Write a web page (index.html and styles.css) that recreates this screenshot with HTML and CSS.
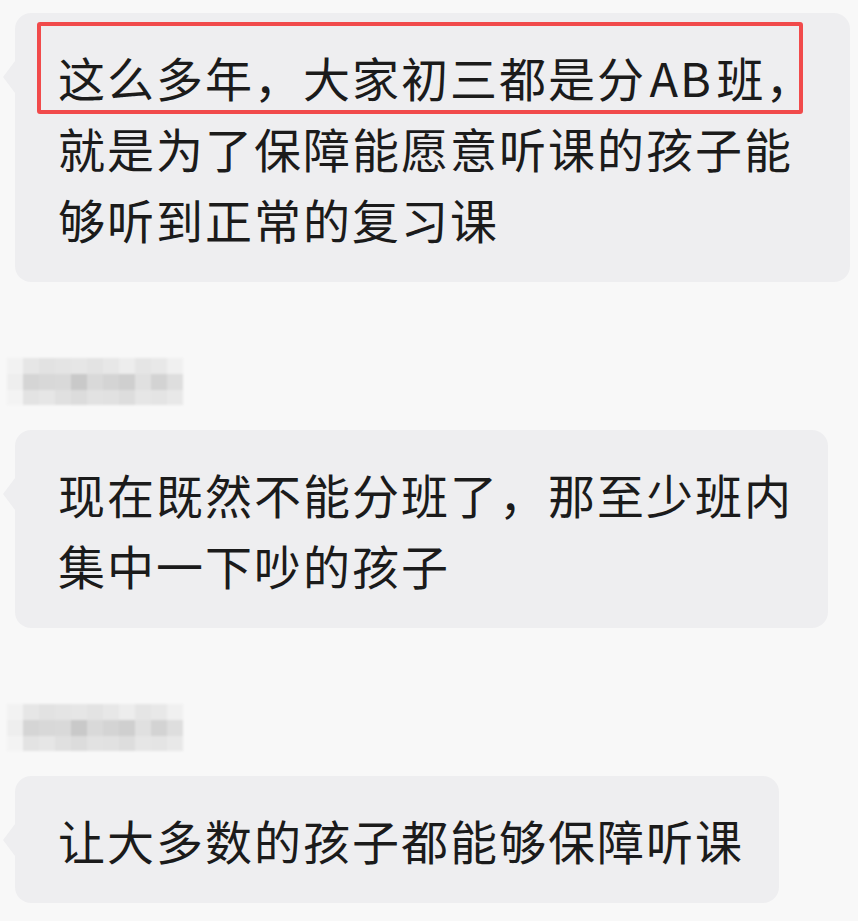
FILE: index.html
```html
<!DOCTYPE html>
<html lang="zh-CN">
<head>
    <meta charset="UTF-8">
    <meta name="viewport" content="width=device-width, initial-scale=1.0">
    <title>聊天记录</title>
    <link rel="stylesheet" href="styles.css">
</head>
<body>
    <!-- Chat log -->
    <main class="chat">
        <!-- First message (name cropped off above) -->
        <div class="group first">
            <div class="bubble">
                <span class="mark"></span>
                这么多年，大家初三都是分<span class="latin"> AB </span>班，<br>
                就是为了保障能愿意听课的孩子能<br>
                够听到正常的复习课
            </div>
        </div>

        <!-- Second message -->
        <div class="group">
            <div class="name">
                <i style="background:#f2f2f2"></i><i style="background:#e6e6e6"></i><i style="background:#e2e2e2"></i><i style="background:#e4e4e4"></i><i style="background:#e6e6e6"></i><i style="background:#e3e3e3"></i><i style="background:#e7e7e7"></i><i style="background:#ededed"></i><i style="background:#e5e5e5"></i><i style="background:#e8e8e8"></i><i style="background:#f0f0f0"></i>
                <i style="background:#eeeeee"></i><i style="background:#d5d5d5"></i><i style="background:#d8d8d8"></i><i style="background:#d9d9d9"></i><i style="background:#c9c9c9"></i><i style="background:#d9d9d9"></i><i style="background:#d4d4d4"></i><i style="background:#cfcfcf"></i><i style="background:#e0e0e0"></i><i style="background:#d3d3d3"></i><i style="background:#dedede"></i>
                <i style="background:#f3f3f3"></i><i style="background:#e3e3e3"></i><i style="background:#e6e6e6"></i><i style="background:#e0e0e0"></i><i style="background:#dcdcdc"></i><i style="background:#e2e2e2"></i><i style="background:#e1e1e1"></i><i style="background:#dddddd"></i><i style="background:#e6e6e6"></i><i style="background:#e4e4e4"></i><i style="background:#e8e8e8"></i>
            </div>
            <div class="bubble">
                现在既然不能分班了，那至少班内<br>
                集中一下吵的孩子
            </div>
        </div>

        <!-- Third message -->
        <div class="group">
            <div class="name">
                <i style="background:#f2f2f2"></i><i style="background:#e6e6e6"></i><i style="background:#e2e2e2"></i><i style="background:#e4e4e4"></i><i style="background:#e6e6e6"></i><i style="background:#e3e3e3"></i><i style="background:#e7e7e7"></i><i style="background:#ededed"></i><i style="background:#e5e5e5"></i><i style="background:#e8e8e8"></i><i style="background:#f0f0f0"></i>
                <i style="background:#eeeeee"></i><i style="background:#d5d5d5"></i><i style="background:#d8d8d8"></i><i style="background:#d9d9d9"></i><i style="background:#c9c9c9"></i><i style="background:#d9d9d9"></i><i style="background:#d4d4d4"></i><i style="background:#cfcfcf"></i><i style="background:#e0e0e0"></i><i style="background:#d3d3d3"></i><i style="background:#dedede"></i>
                <i style="background:#f3f3f3"></i><i style="background:#e3e3e3"></i><i style="background:#e6e6e6"></i><i style="background:#e0e0e0"></i><i style="background:#dcdcdc"></i><i style="background:#e2e2e2"></i><i style="background:#e1e1e1"></i><i style="background:#dddddd"></i><i style="background:#e6e6e6"></i><i style="background:#e4e4e4"></i><i style="background:#e8e8e8"></i>
            </div>
            <div class="bubble">
                让大多数的孩子都能够保障听课
            </div>
        </div>
    </main>
</body>
</html>
```

FILE: styles.css
```css
/* Basic page styling */
* {
    margin: 0;
    padding: 0;
    box-sizing: border-box;
}

body {
    background-color: #f8f8f8;
    color: #1b1b1b;
    font-family: "Noto Sans CJK SC", "Noto Sans", sans-serif;
    overflow: hidden;
}

/* Chat column */
.chat {
    padding: 13px 0 0 7px;
    display: flex;
    flex-direction: column;
}

.group {
    display: flex;
    flex-direction: column;
    align-items: flex-start;
    margin-top: 76px;
}

.group.first {
    margin-top: 0;
}

/* Blurred sender name */
.name {
    display: grid;
    grid-template-columns: repeat(11, 16px);
    grid-auto-rows: 16px;
    width: 176px;
    height: 47px;
    overflow: hidden;
    filter: blur(1.2px);
    margin-bottom: 25px;
}

.name i {
    display: block;
}

/* Message bubble */
.bubble {
    position: relative;
    margin-left: 8px;
    background-color: #eeeef0;
    border-radius: 16px;
    padding: 28px 35px 28px 43px;
    font-size: 47px;
    line-height: 71px;
    letter-spacing: 2px;
    white-space: nowrap;
}

/* Latin letters sit tighter against the hanzi */
.latin {
    word-spacing: -9px;
}

/* Little tail on the left */
.bubble::before {
    content: "";
    position: absolute;
    left: -12px;
    top: 48px;
    border-style: solid;
    border-width: 16px 12px 16px 0;
    border-color: transparent #eeeef0 transparent transparent;
}

/* Red highlight drawn over the first line */
.mark {
    position: absolute;
    left: 22px;
    top: 9px;
    width: 766px;
    height: 92px;
    border: 4px solid #f14a4b;
    border-radius: 3px;
}
```
